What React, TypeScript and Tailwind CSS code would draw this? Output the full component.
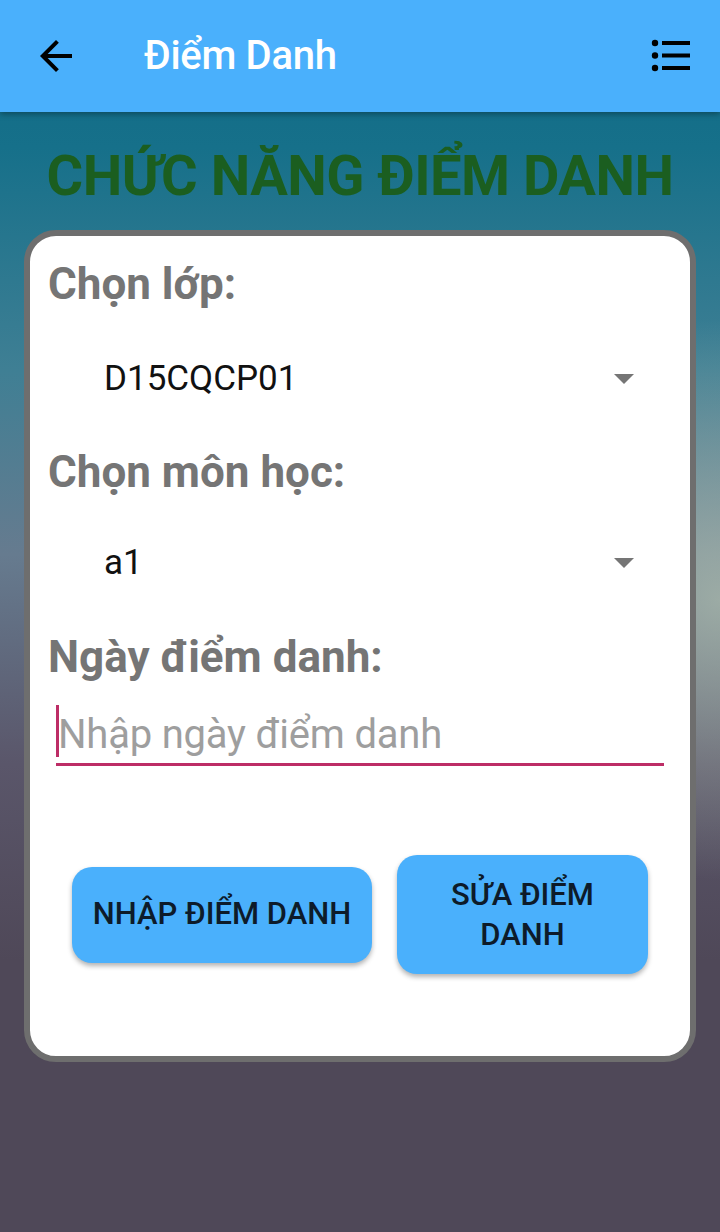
import React from "react";

export default function App() {
  return (
    <div
      className="relative w-[720px] h-[1232px] overflow-hidden flex flex-col"
      style={{ fontFamily: "Roboto, 'Noto Sans', sans-serif" }}
    >
      {/* background */}
      <div className="absolute inset-0 bg-[linear-gradient(180deg,#0f6a85_0%,#16708a_12%,#3f7f94_30%,#667b8f_45%,#5a566a_62%,#4f4858_78%,#4f4858_100%)]" />
      <div className="absolute inset-0 bg-[radial-gradient(ellipse_260px_280px_at_720px_600px,rgba(175,190,175,0.75),rgba(175,190,175,0)_100%)]" />

      {/* app bar */}
      <div className="relative z-10 h-[112px] bg-[#4ab0fc] flex items-center pl-[32px] pr-[30px] shadow-[0_2px_6px_rgba(0,0,0,0.35)]">
        <svg width="48" height="48" viewBox="0 0 24 24" className="mr-[64px]">
          <path d="M20 11H7.83l5.59-5.59L12 4l-8 8 8 8 1.41-1.41L7.83 13H20v-2z" fill="#000" />
        </svg>
        <div className="text-white text-[40px] font-medium flex-1 leading-[48px] tracking-[-0.3px]">Điểm Danh</div>
        <svg width="40" height="40" viewBox="0 0 40 40">
          <circle cx="5" cy="7" r="3.2" fill="#000" />
          <circle cx="5" cy="19.5" r="3.2" fill="#000" />
          <circle cx="5" cy="32" r="3.2" fill="#000" />
          <rect x="12" y="5" width="28" height="4" fill="#000" />
          <rect x="12" y="17.5" width="28" height="4" fill="#000" />
          <rect x="12" y="30" width="28" height="4" fill="#000" />
        </svg>
      </div>

      <div className="relative z-10 flex flex-col items-center">
        <div className="mt-[36px] text-[56px] font-bold text-[#1b5e20] leading-[56px] tracking-[-0.5px] whitespace-nowrap">
          CHỨC NĂNG ĐIỂM DANH
        </div>

        <div className="mt-[26px] w-[672px] h-[832px] rounded-[32px] border-[6px] border-[#6e6e6e] bg-white flex flex-col px-[18px]">
          <div className="mt-[20px] text-[44px] font-bold text-[#757575] leading-[56px]">Chọn lớp:</div>
          <div className="mt-[37px] h-[60px] flex items-center pl-[56px] pr-[38px]">
            <span className="flex-1 text-[35px] text-[#111] leading-[60px]">D15CQCP01</span>
            <svg width="20" height="11" viewBox="0 0 20 11">
              <path d="M0 0h20L10 10z" fill="#757575" />
            </svg>
          </div>
          <div className="mt-[35px] text-[44px] font-bold text-[#757575] leading-[56px]">Chọn môn học:</div>
          <div className="mt-[33px] h-[60px] flex items-center pl-[56px] pr-[38px]">
            <span className="flex-1 text-[35px] text-[#111] leading-[60px]">a1</span>
            <svg width="20" height="11" viewBox="0 0 20 11">
              <path d="M0 0h20L10 10z" fill="#757575" />
            </svg>
          </div>
          <div className="mt-[36px] text-[44px] font-bold text-[#757575] leading-[56px]">Ngày điểm danh:</div>
          <div className="mt-[8px] mx-[8px] relative h-[73px] pt-[14px] border-b-[3px] border-[#bd2d66] flex items-center">
            <div className="absolute left-0 top-[12px] w-[3px] h-[52px] bg-[#bd2d66]" />
            <span className="pl-[2px] text-[40px] text-[#9e9e9e] leading-[56px] tracking-[-0.2px]">Nhập ngày điểm danh</span>
          </div>

          <div className="mt-[89px] flex items-center">
            <div className="ml-[24px] w-[300px] h-[96px] rounded-[20px] bg-[#4ab0fc] shadow-[0_3px_5px_rgba(0,0,0,0.3)] flex items-center justify-center text-[31px] font-medium text-[#0d1b2a] whitespace-nowrap">
              NHẬP ĐIỂM DANH
            </div>
            <div className="ml-[25px] w-[251px] h-[119px] rounded-[20px] bg-[#4ab0fc] shadow-[0_3px_5px_rgba(0,0,0,0.3)] flex items-center justify-center text-center text-[31px] font-medium text-[#0d1b2a] leading-[40px] px-[36px]">
              SỬA ĐIỂM DANH
            </div>
          </div>
        </div>
      </div>
    </div>
  );
}
